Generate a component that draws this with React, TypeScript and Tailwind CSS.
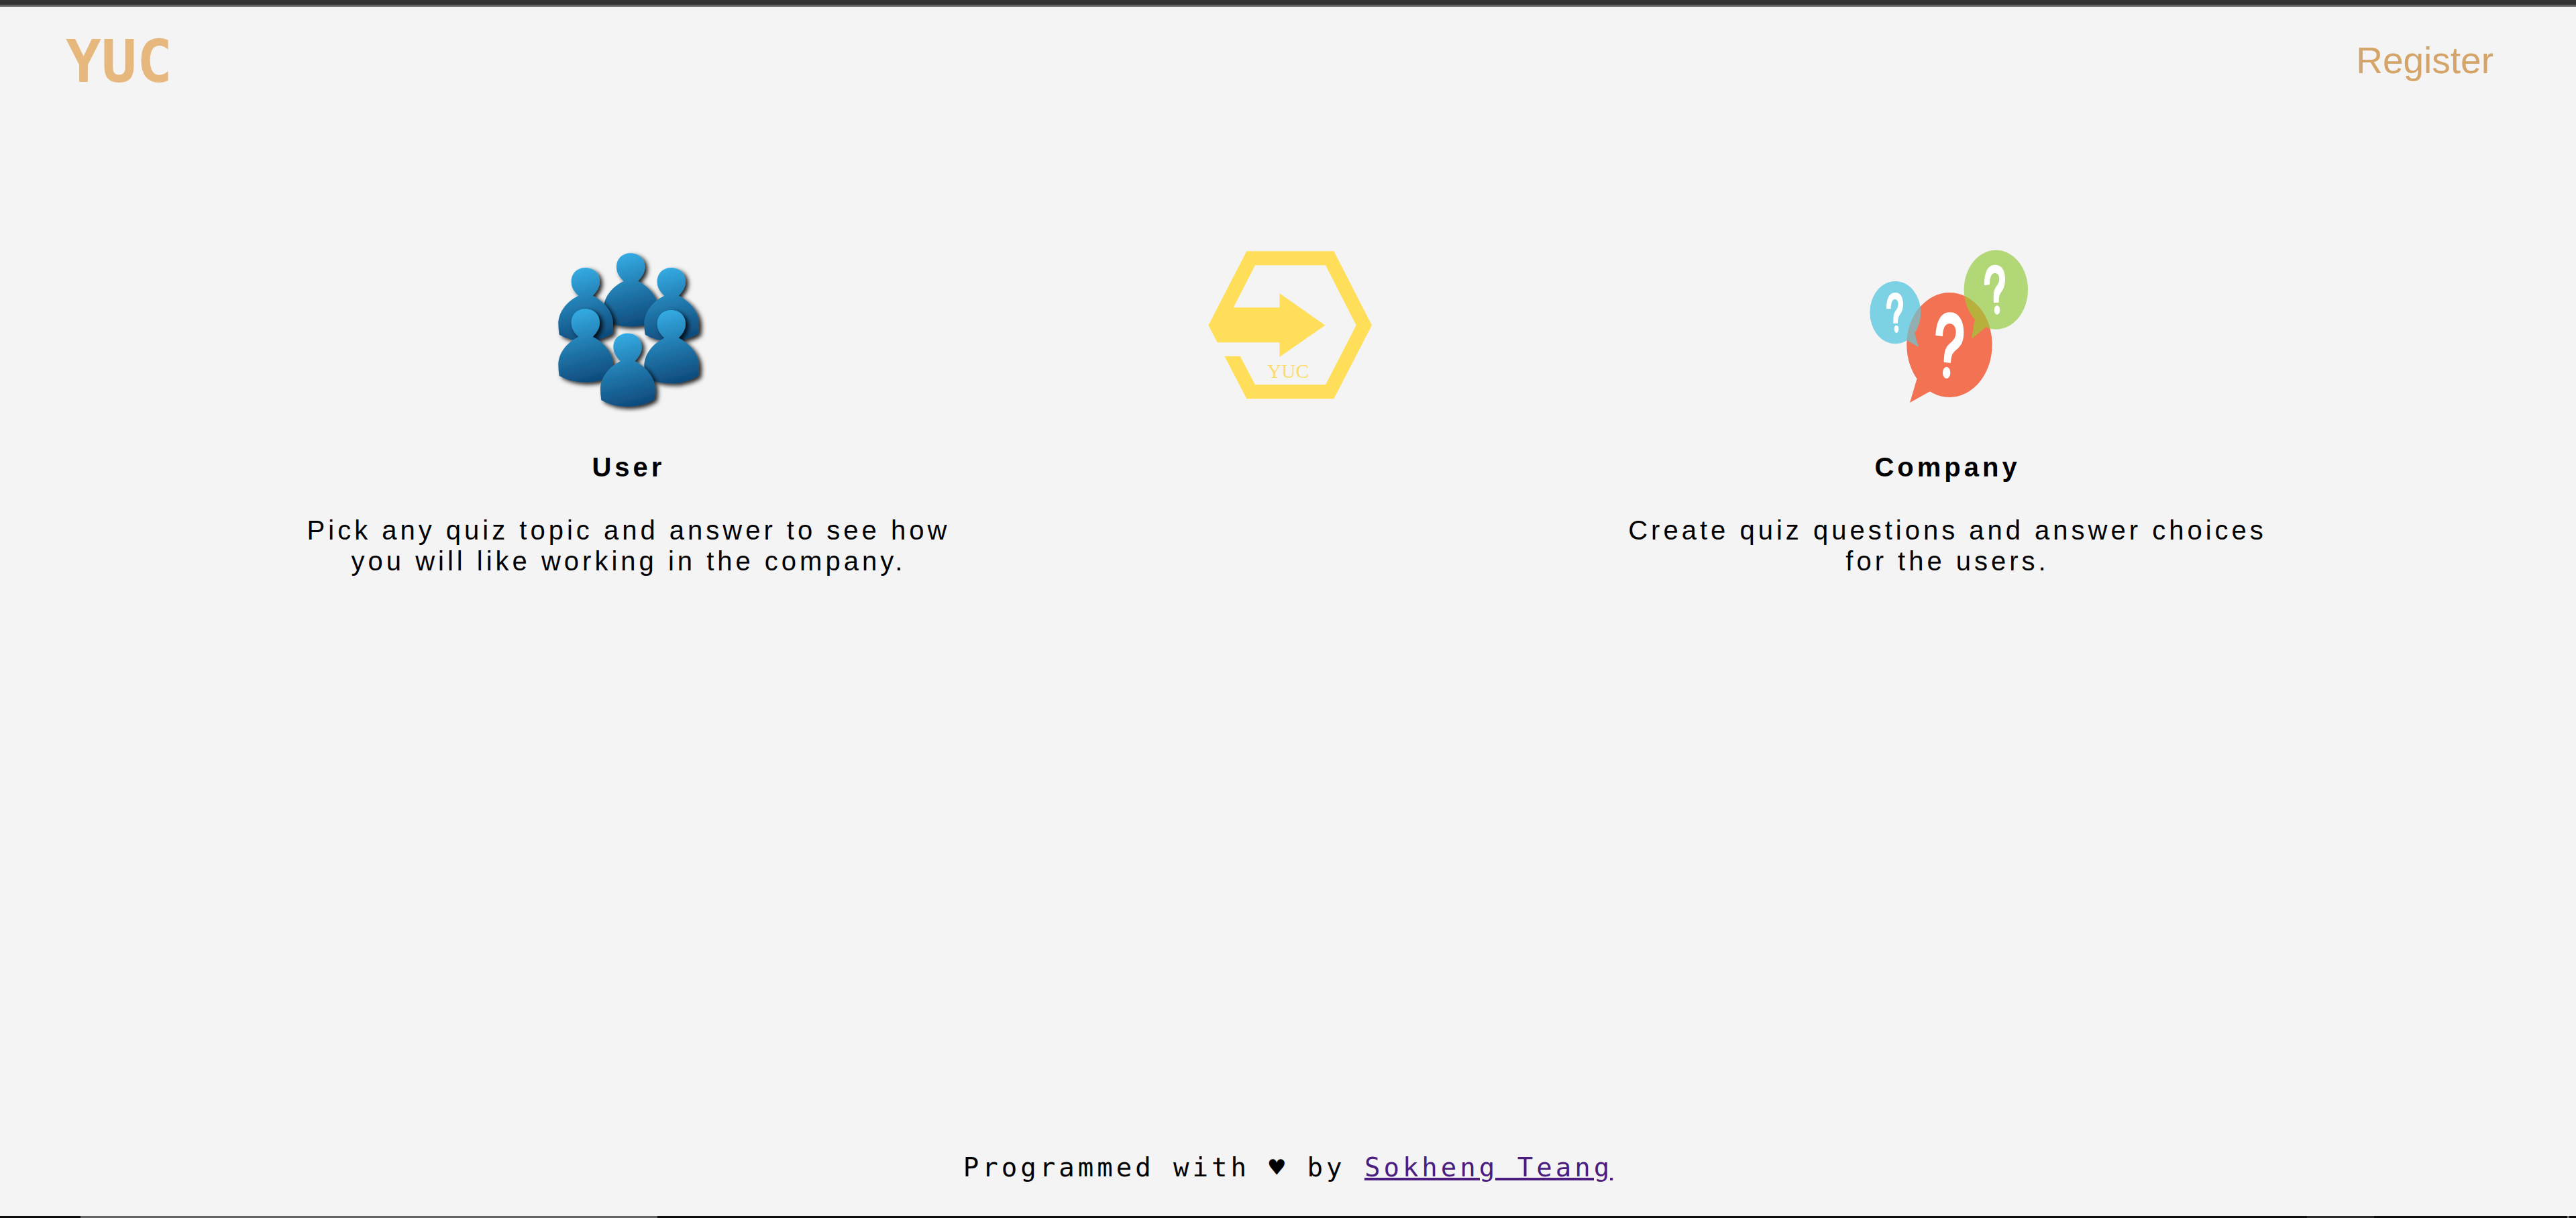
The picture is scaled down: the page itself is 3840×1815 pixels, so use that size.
import type { ReactNode } from "react";

const PERSON =
  "M-31 125 C-48 108 -63 90 -63 62 C-63 24 -36 0 0 0 C38 0 64 26 64 62 C64 90 48 108 33 125 C85 150 124 200 124 250 Q124 272 121 295 Q70 328 0 328 Q-70 328 -117 299 Q-121 272 -121 250 C-121 200 -85 150 -31 125Z";

const PEOPLE: [number, number][] = [
  [420, 82],
  [218, 147],
  [602, 147],
  [218, 331],
  [602, 336],
  [406, 440],
];

function PeopleIcon() {
  return (
    <svg viewBox="36 45 750 750" className="size-[250px]" role="img" aria-label="Group of users">
      <defs>
        <linearGradient id="person" x1="0.4" y1="0" x2="0.6" y2="1">
          <stop offset="0" stopColor="#34ace4" />
          <stop offset="0.5" stopColor="#2179ad" />
          <stop offset="1" stopColor="#0e4a7b" />
        </linearGradient>
        <filter id="shade" x="-30%" y="-20%" width="170%" height="150%">
          <feDropShadow dx="13" dy="10" stdDeviation="9" floodColor="#000" floodOpacity="0.85" />
        </filter>
      </defs>
      {PEOPLE.map(([x, y]) => (
        <g key={`${x}-${y}`} transform={`translate(${x} ${y})`}>
          <path d={PERSON} fill="url(#person)" filter="url(#shade)" />
        </g>
      ))}
    </svg>
  );
}

function HexagonIcon() {
  return (
    <svg viewBox="45 45 750 750" className="size-[250px]" role="img" aria-label="YUC">
      <path
        fill="#ffde59"
        d="M235 73H625L795 404L625 733H235L136 542H206L273 670H588L725 404L588 136H273L176 325H382V261L586 404L382 546V481H104L64 404Z"
      />
      <text
        x="420"
        y="638"
        textAnchor="middle"
        className="fill-[#fddc68] font-['Liberation_Serif',serif] text-[88px]"
      >
        YUC
      </text>
    </svg>
  );
}

const RED = "M217 492a191 234 0 1 1 382 0a191 234 0 1 1-382 0ZM231 750L262 645L340 620L321 700Z";
const BLUE = "M52 347a114 140 0 1 1 228 0a114 140 0 1 1-228 0ZM270 502L222 474L200 420L253 440Z";
const GREEN = "M473 245a143 177 0 1 1 286 0a143 177 0 1 1-286 0ZM507 466L520 383L570 350L570 413Z";

function QuestionsIcon() {
  return (
    <svg viewBox="24 45 750 750" className="size-[250px]" role="img" aria-label="Questions">
      <clipPath id="red-bubble">
        <path d={RED} />
      </clipPath>
      <path d={BLUE} fill="#7dd1e4" />
      <path d={GREEN} fill="#b2d776" />
      <path d={RED} fill="#f37254" />
      <g clipPath="url(#red-bubble)">
        <path d={BLUE} fill="#91afb0" />
        <path d={GREEN} fill="#b8b03c" />
      </g>
      <g fill="#fff">
        <path d="M346 450C350 385 370 346 410 346C450 346 472 385 472 435C472 485 455 500 435 517C420 530 415 545 414 573L383 569C384 530 388 510 400 495C420 475 437 465 437 435C437 410 425 397 408 397C388 397 378 420 378 454Z" />
        <ellipse cx="395" cy="616" rx="17" ry="26" />
        <path d="M564 226C564 165 580 134 612 134C645 134 657 165 657 195C657 230 648 245 638 258C631 268 629 280 629 302L606 304C604 270 606 250 614 236C624 220 631 215 631 195C630 178 622 171 611 171C596 171 588 190 588 222Z" />
        <ellipse cx="621" cy="336" rx="13" ry="20" />
        <path d="M126 331C126 285 138 258 165 258C190 258 201 280 201 310C201 335 193 348 186 357C179 367 177 378 177 395L157 396C157 370 158 355 165 343C174 330 179 322 179 308C179 295 173 288 164 288C152 288 146 305 146 331Z" />
        <ellipse cx="171" cy="421" rx="10" ry="17" />
      </g>
    </svg>
  );
}

function Feature({ icon, title, text }: { icon: ReactNode; title: string; text: string }) {
  return (
    <section className="flex flex-col items-center text-center text-[40px] leading-[46px] tracking-[5px] text-black">
      {icon}
      <h2 className="mt-[58px] font-bold">{title}</h2>
      <p className="mt-12">{text}</p>
    </section>
  );
}

export default function App() {
  return (
    <div className="flex min-h-screen flex-col bg-[#f4f4f4] font-['Liberation_Sans',Arial,sans-serif]">
      <div className="h-[10px] border-b-[3px] border-[#606060] bg-[#333333]" />
      <header className="flex items-start justify-between pt-5 pr-[123px] pl-[98px]">
        <a
          href="#"
          className="font-['DejaVu_Sans_Mono',monospace] text-[88px] leading-[124px] font-bold text-[#e6b87d]"
        >
          YUC
        </a>
        <a href="#register" className="mt-7 text-[55px] leading-[64px] text-[#d4a468]">
          Register
        </a>
      </header>
      <main className="mx-auto mt-[211px] grid w-[76.8%] flex-1 grid-cols-3 items-start">
        <Feature
          icon={<PeopleIcon />}
          title="User"
          text="Pick any quiz topic and answer to see how you will like working in the company."
        />
        <div className="flex justify-center">
          <HexagonIcon />
        </div>
        <Feature
          icon={<QuestionsIcon />}
          title="Company"
          text="Create quiz questions and answer choices for the users."
        />
      </main>
      <footer>
        <p className="pb-12 text-center font-['DejaVu_Sans_Mono',monospace] text-[39px] leading-[48px] tracking-[5px] text-black">
          Programmed with ♥ by{" "}
          <a href="#author" className="text-[#4c1d80] underline decoration-4">
            Sokheng Teang
          </a>
        </p>
        <div className="flex h-[3px] bg-[#0e0c0d]">
          <div className="ml-[120px] w-[860px] bg-[#666464]" />
          <div className="mr-72 ml-auto w-[100px] bg-[#2b2a2a]" />
          <div className="mr-[10px] w-[3px] bg-[#777777]" />
        </div>
      </footer>
    </div>
  );
}
